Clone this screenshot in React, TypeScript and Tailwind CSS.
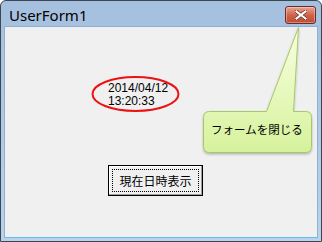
export default function App() {
  return (
    <div className="relative w-[322px] h-[242px] bg-white">
      {/* window frame */}
      <div className="w-[322px] h-[242px] rounded-t-[6px] border border-[#3c4650] bg-gradient-to-b from-[#a5c0de] to-[#bad3ec] flex flex-col px-[3px] pb-[3px]">
        {/* title bar */}
        <div className="h-[25px] flex items-start justify-between">
          <span className="mt-[5px] ml-[5px] text-[15px] leading-[18px] text-black font-['Noto_Sans',sans-serif]">
            UserForm1
          </span>
          <div className="mt-[5px] mr-[2px] w-[31px] h-[18px] rounded-[3px] border border-[#6b2a22] bg-gradient-to-b from-[#e8a493] via-[#d0634c] to-[#c04a30] flex items-center justify-center shadow-[inset_0_0_0_1px_rgba(255,255,255,0.35)]">
            <svg width="12" height="10" viewBox="0 0 12 10">
              <path d="M1.5 1.5 L10.5 8.5 M10.5 1.5 L1.5 8.5" stroke="#5a2a20" strokeWidth="3.4" strokeLinecap="square" />
              <path d="M1.5 1.5 L10.5 8.5 M10.5 1.5 L1.5 8.5" stroke="#ffffff" strokeWidth="2.2" strokeLinecap="square" />
            </svg>
          </div>
        </div>
        {/* client area */}
        <div className="flex-1 border border-[#8fb0d2] border-b-[#5fc0e8] bg-[#f0f0f0] flex flex-col items-start">
          <div className="ml-[103px] mt-[55px] text-[12px] leading-[13px] text-black font-['Liberation_Sans',sans-serif]">
            <div>2014/04/12</div>
            <div>13:20:33</div>
          </div>
          <div className="ml-[103px] mt-[57px] w-[95px] h-[31px] border border-black bg-[#f0f0f0] shadow-[inset_-1px_-1px_0_#a0a0a0,inset_1px_1px_0_#ffffff] p-[3px]">
            <div className="w-full h-full border border-dotted border-black flex items-center justify-center text-[12px] text-black font-['Noto_Sans_CJK_JP',sans-serif]">
              現在日時表示
            </div>
          </div>
        </div>
      </div>

      {/* red ellipse around the label */}
      <svg className="absolute left-0 top-0 pointer-events-none" width="322" height="242">
        <ellipse cx="135.5" cy="94" rx="43" ry="17" fill="none" stroke="#ee1111" strokeWidth="2" />
      </svg>

      {/* callout */}
      <svg className="absolute left-0 top-0 pointer-events-none" width="322" height="242">
        <defs>
          <linearGradient id="cg" x1="0" y1="0" x2="0" y2="1">
            <stop offset="0" stopColor="#f8ffe0" />
            <stop offset="1" stopColor="#d6f29c" />
          </linearGradient>
          <filter id="sh" x="-10%" y="-10%" width="130%" height="130%">
            <feDropShadow dx="0" dy="1.5" stdDeviation="1" floodColor="#000" floodOpacity="0.25" />
          </filter>
        </defs>
        <path
          d="M209.5,111.5 L266.5,111.5 L298.5,27.5 L293.5,111.5 L305.5,111.5 Q311.5,111.5 311.5,117.5 L311.5,146.5 Q311.5,152.5 305.5,152.5 L209.5,152.5 Q203.5,152.5 203.5,146.5 L203.5,117.5 Q203.5,111.5 209.5,111.5 Z"
          fill="url(#cg)"
          stroke="#a6c86a"
          strokeWidth="1"
          filter="url(#sh)"
        />
      </svg>
      <div className="absolute left-[211px] top-[122px] text-[11.5px] leading-[15px] text-black font-['Noto_Sans_CJK_JP',sans-serif]">
        フォームを閉じる
      </div>
    </div>
  );
}
